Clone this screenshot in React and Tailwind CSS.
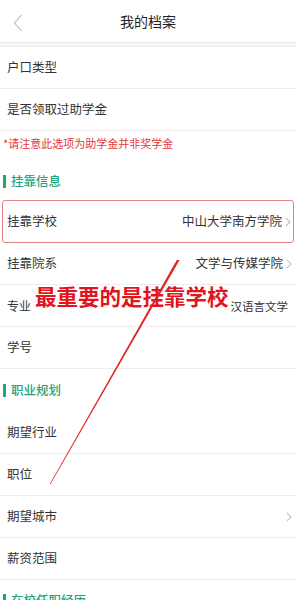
import React from "react";

const font = { fontFamily: '"Noto Sans CJK SC", "Noto Sans", sans-serif' };

function Chevron() {
  return (
    <svg width="6" height="10" viewBox="0 0 6 10" className="ml-[3px] shrink-0">
      <polyline points="1,1 5,5 1,9" fill="none" stroke="#c4c4c4" strokeWidth="1.1" />
    </svg>
  );
}

function Row({ label, value, chevron, className = "" }) {
  return (
    <div className={`flex h-[42px] items-center justify-between border-b border-[#ededed] pl-[7px] pr-[4px] ${className}`}>
      <span className="text-[12.5px] text-[#333]">{label}</span>
      <div className="flex items-center">
        {value && <span className="text-[12.5px] text-[#333]">{value}</span>}
        {chevron && <Chevron />}
      </div>
    </div>
  );
}

function Section({ title, className = "" }) {
  return (
    <div className={`flex items-center pl-[3px] ${className}`}>
      <div className="h-[13px] w-[3px] bg-[#1fa67a]" />
      <span className="ml-[5px] text-[12.5px] font-medium text-[#22a47c]">{title}</span>
    </div>
  );
}

export default function App() {
  return (
    <div className="relative h-[600px] w-[296px] overflow-hidden bg-white" style={font}>
      {/* header */}
      <div className="relative flex h-[43px] items-center justify-center border-b border-[#e6e6e6]">
        <svg width="10" height="18" viewBox="0 0 10 18" className="absolute left-[13px] top-[14px]">
          <polyline points="8.5,1 1.5,9 8.5,17" fill="none" stroke="#b8b8b8" strokeWidth="1.1" />
        </svg>
        <span className="text-[14px] text-[#222]">我的档案</span>
      </div>
      <div className="h-[4px] border-b border-[#eeeeee] bg-[#f6f6f6]" />

      <Row label="户口类型" />
      <Row label="是否领取过助学金" />

      <div className="h-[31px] pl-[3px] pt-[4px] text-[11px] leading-[16px] text-[#e2383c]">
        *请注意此选项为助学金并非奖学金
      </div>

      <Section title="挂靠信息" className="h-[38px]" />

      <div className="mx-[2px] box-border flex h-[43px] items-center justify-between rounded-[3px] border-[1.5px] border-[#e08585] pl-[4px] pr-[2px]">
        <span className="text-[12.5px] text-[#333]">挂靠学校</span>
        <div className="flex items-center">
          <span className="text-[12.5px] text-[#333]">中山大学南方学院</span>
          <Chevron />
        </div>
      </div>

      <Row label="挂靠院系" value="文学与传媒学院" chevron />

      <div className="relative flex h-[42px] items-center justify-between border-b border-[#ededed] pl-[7px] pr-[8px]">
        <span className="text-[12px] text-[#333]">专业</span>
        <span className="mt-[2px] text-[11.5px] text-[#333]">汉语言文学</span>
        <span className="absolute left-[35px] top-[0px] text-[21.5px] font-bold leading-[22px] text-[#e3141c]">
          最重要的是挂靠学校
        </span>
      </div>

      <Row label="学号" />

      <Section title="职业规划" className="h-[43px]" />

      <Row label="期望行业" />
      <Row label="职位" />
      <Row label="期望城市" chevron />
      <Row label="薪资范围" />

      <Section title="在校任职经历" className="h-[40px]" />

      {/* annotation line */}
      <svg className="pointer-events-none absolute left-0 top-0" width="296" height="600" viewBox="0 0 296 600">
        <polygon points="176.8,260 179.6,260 50.6,484 49.8,484" fill="#e02424" />
      </svg>
    </div>
  );
}
